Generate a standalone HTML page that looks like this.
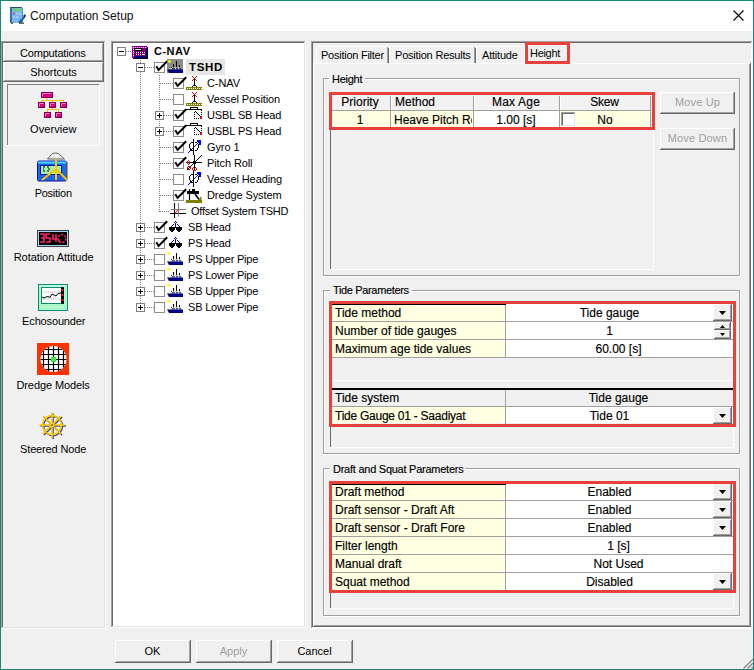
<!DOCTYPE html><html><head><meta charset="utf-8"><style>
html,body{margin:0;padding:0;}
body{width:754px;height:670px;position:relative;overflow:hidden;background:#f0f0f0;font-family:"Liberation Sans",sans-serif;}
body div{position:absolute;}
.t{white-space:nowrap;}
.s{-webkit-text-stroke:0.15px currentColor;}
svg{position:absolute;overflow:visible}
</style></head><body>
<div style="left:0px;top:0px;width:754px;height:31px;background:#fff"></div>
<svg style="left:9px;top:7px" width="17" height="17" viewBox="0 0 17 17">
<rect x="1" y="0" width="12" height="16" fill="#78b8ee"/>
<rect x="1" y="0" width="2" height="16" fill="#3a70b0"/>
<rect x="1" y="0" width="12" height="1" fill="#2a4a78"/>
<rect x="13" y="1" width="1" height="14" fill="#4a90e0"/>
<rect x="4" y="1.5" width="8" height="2.5" fill="#70d060"/>
<rect x="4" y="5.5" width="2" height="2" fill="#c06070"/>
<rect x="7" y="5.5" width="2" height="2" fill="#a8d0f0"/><rect x="10" y="5.5" width="2" height="2" fill="#a8d0f0"/>
<rect x="4" y="9" width="2" height="1.5" fill="#a8d0f0"/><rect x="7" y="9" width="2" height="1.5" fill="#a8d0f0"/>
<path d="M9 15 L15 9 L16.5 10 L12 16 Z" fill="#2060c0"/>
<path d="M14 9 L16 7 L17 9 L15.5 10.5 Z" fill="#202830"/>
<rect x="10" y="15.5" width="5" height="1.2" fill="#303030"/><rect x="2" y="15.5" width="2" height="1.2" fill="#303030"/>
</svg>
<div class="t" style="left:30px;top:9px;font-size:12px;line-height:14px;color:#101010;font-weight:normal;letter-spacing:0.05px;">Computation Setup</div>
<svg style="left:733px;top:10px" width="11" height="11" viewBox="0 0 11 11"><path d="M0.5 0.5 L10.5 10.5 M10.5 0.5 L0.5 10.5" stroke="#000" stroke-width="1.1"/></svg>
<div style="left:0px;top:0px;width:754px;height:1px;background:#17897a"></div>
<div style="left:0px;top:669px;width:754px;height:1px;background:#17897a"></div>
<div style="left:0px;top:0px;width:1px;height:670px;background:#17897a"></div>
<div style="left:753px;top:0px;width:1px;height:670px;background:#17897a"></div>
<div style="left:1px;top:41px;width:105px;height:1px;background:#a0a0a0"></div>
<div style="left:1px;top:41px;width:1px;height:588px;background:#a0a0a0"></div>
<div style="left:2px;top:42px;width:103px;height:1px;background:#696969"></div>
<div style="left:2px;top:42px;width:1px;height:586px;background:#696969"></div>
<div style="left:1px;top:628px;width:105px;height:1px;background:#fff"></div>
<div style="left:105px;top:41px;width:1px;height:588px;background:#fff"></div>
<div style="left:2px;top:627px;width:103px;height:1px;background:#e3e3e3"></div>
<div style="left:104px;top:42px;width:1px;height:586px;background:#e3e3e3"></div>
<div style="left:3px;top:43px;width:101px;height:19px;background:#f0f0f0"></div>
<div style="left:3px;top:43px;width:101px;height:1px;background:#fff"></div>
<div style="left:3px;top:43px;width:1px;height:19px;background:#fff"></div>
<div style="left:3px;top:61px;width:101px;height:1px;background:#696969"></div>
<div style="left:103px;top:43px;width:1px;height:19px;background:#696969"></div>
<div style="left:4px;top:60px;width:99px;height:1px;background:#a0a0a0"></div>
<div style="left:102px;top:44px;width:1px;height:17px;background:#a0a0a0"></div>
<div class="t" style="left:-47.2px;width:200px;text-align:center;top:47px;font-size:11px;line-height:13px;color:#000;font-weight:normal;letter-spacing:-0.2px">Computations</div>
<div style="left:3px;top:62px;width:101px;height:20px;background:#f0f0f0"></div>
<div style="left:3px;top:62px;width:101px;height:1px;background:#fff"></div>
<div style="left:3px;top:62px;width:1px;height:20px;background:#fff"></div>
<div style="left:3px;top:81px;width:101px;height:1px;background:#696969"></div>
<div style="left:103px;top:62px;width:1px;height:20px;background:#696969"></div>
<div style="left:4px;top:80px;width:99px;height:1px;background:#a0a0a0"></div>
<div style="left:102px;top:63px;width:1px;height:18px;background:#a0a0a0"></div>
<div class="t" style="left:-46.5px;width:200px;text-align:center;top:66px;font-size:11px;line-height:13px;color:#000;font-weight:normal;letter-spacing:0px">Shortcuts</div>
<div style="left:7px;top:84px;width:93px;height:1px;background:#808080"></div>
<div style="left:7px;top:84px;width:1px;height:62px;background:#808080"></div>
<div style="left:7px;top:145px;width:93px;height:1px;background:#fff"></div>
<div style="left:99px;top:84px;width:1px;height:62px;background:#fff"></div>
<svg style="left:36px;top:88px" width="32" height="32" viewBox="0 0 32 32">
<g stroke="#f0c000" stroke-width="1" fill="none"><path d="M11 10 V12.5 M5.5 12.5 H27.5 M5.5 12 V14 M16.5 12 V14 M27.5 12 V14 M16.5 20 V21.5 M11.5 21.5 H22.5 M11.5 21 V24 M22.5 21 V24"/></g>
<g fill="#d8007c" stroke="#800050" stroke-width="1">
<rect x="5.5" y="4.5" width="11" height="5"/>
<rect x="2.5" y="14.5" width="6" height="5"/><rect x="13.5" y="14.5" width="6" height="5"/><rect x="24.5" y="14.5" width="6" height="5"/>
<rect x="8.5" y="24.5" width="6" height="5"/><rect x="19.5" y="24.5" width="6" height="5"/>
</g><g stroke="#ff70d0" stroke-width="1" fill="none">
<path d="M6.5 8.5 V5.5 H15.5"/><path d="M3.5 18.5 V15.5 H7.5 M14.5 18.5 V15.5 H18.5 M25.5 18.5 V15.5 H29.5 M9.5 28.5 V25.5 H13.5 M20.5 28.5 V25.5 H24.5"/>
</g></svg>
<div class="t" style="left:-46.7px;width:200px;text-align:center;top:123px;font-size:11px;line-height:13px;color:#000;font-weight:normal;letter-spacing:0.1px">Overview</div>
<svg style="left:36px;top:152px" width="32" height="32" viewBox="0 0 32 32">
<path d="M11.5 7 L16.5 1.5 Q19.5 0.5 22.5 1.5 L28.5 7 Z" fill="#f0f0f0" stroke="#606060" stroke-width="1"/>
<rect x="1.5" y="9" width="29" height="20" rx="1.5" fill="#1a6af0" stroke="#1010a0" stroke-width="1"/>
<rect x="2" y="9.5" width="28" height="2" fill="#40d8ff"/>
<rect x="30" y="10" width="1.5" height="18" fill="#505050"/>
<rect x="4.5" y="13.5" width="21" height="9" fill="#a8f0b0" stroke="#1010a0" stroke-width="1"/>
<path d="M7 15 h2 M7 17 h1 M7 19 h2 M11 15 h2 M11 19 h2 M13 16 v2" stroke="#000" stroke-width="1"/>
<path d="M5 25.5 h2 M9 25.5 h2 M13 25.5 h2 M22 25.5 h5" stroke="#4040c0" stroke-width="1"/>
<path d="M20 7 V28 M20 17 L6 28 M20 17 L31 28" stroke="#f8c400" stroke-width="2" fill="none"/>
</svg>
<div class="t" style="left:-46.8px;width:200px;text-align:center;top:187px;font-size:11px;line-height:13px;color:#000;font-weight:normal;letter-spacing:-0.25px">Position</div>
<svg style="left:37px;top:230px" width="32" height="17" viewBox="0 0 32 17">
<rect x="0.5" y="0.5" width="31" height="16" fill="#000" stroke="#404040"/>
<rect x="1.5" y="1.5" width="29" height="14" fill="none" stroke="#a0d8f8"/>
<g fill="none" stroke="#ff2068" stroke-width="1.6">
<path d="M3 4 H7 V12 H3 M4 8 H7"/><path d="M13 4 H9 V8 H13 V12 H9"/><path d="M16 4 V9 H20 M19 4 V12"/><path d="M22 10 V12"/>
</g>
<circle cx="25" cy="8.5" r="4" fill="none" stroke="#ff2068" stroke-width="1.6" stroke-dasharray="2.2 1.3"/>
</svg>
<div class="t" style="left:-46.4px;width:200px;text-align:center;top:251px;font-size:11px;line-height:13px;color:#000;font-weight:normal;letter-spacing:-0.05px">Rotation Attitude</div>
<svg style="left:38px;top:284px" width="30" height="28" viewBox="0 0 30 28">
<rect x="0.5" y="0.5" width="29" height="26" fill="#a8f8c8" stroke="#108878" stroke-width="1"/>
<rect x="1.5" y="1.5" width="27" height="1" fill="#c0fff0"/>
<rect x="3.5" y="3.5" width="20" height="16" fill="#fff" stroke="#108878" stroke-width="1"/>
<path d="M4 8 h19 M4 15 h19" stroke="#c8c8c8" stroke-width="0.8"/>
<path d="M4 13 L6 14 L8 13 L10 12.5 L12 13.5 L14 10 L16 11 L18 12 L20 9.5 L23 9" fill="none" stroke="#000" stroke-width="1"/>
<rect x="23" y="3" width="3" height="17" fill="#000"/>
<rect x="23.5" y="5" width="2" height="2" fill="#ff1010"/><rect x="23.5" y="10" width="2" height="2" fill="#ff1010"/><rect x="23.5" y="15" width="2" height="2" fill="#ff1010"/>
<path d="M4 23 h1 M8 23 h1 M12 23 h1 M16 23 h1 M19 23 h1 M22 23 h1 M25 23 h1" stroke="#fff" stroke-width="1.2"/>
</svg>
<div class="t" style="left:-46.3px;width:200px;text-align:center;top:315px;font-size:11px;line-height:13px;color:#000;font-weight:normal;letter-spacing:-0.15px">Echosounder</div>
<svg style="left:37px;top:343px" width="32" height="32" viewBox="0 0 32 32">
<rect x="0" y="0" width="32" height="32" fill="#ff3300"/>
<circle cx="16.5" cy="16" r="13" fill="#fff"/>
<path d="M6.5 7.69 V24.31 M7.63 6.5 H25.37 M11.5 4.00 V28.00 M4.30 11.5 H28.70 M16.5 3.00 V29.00 M3.51 16.5 H29.49 M21.5 4.00 V28.00 M4.72 21.5 H28.28 M26.5 7.69 V24.31 M8.84 26.5 H24.16" stroke="#000" stroke-width="1.2"/>
<rect x="14" y="14" width="5" height="5" fill="#30f030"/>
</svg>
<div class="t" style="left:-46.9px;width:200px;text-align:center;top:379px;font-size:11px;line-height:13px;color:#000;font-weight:normal;letter-spacing:-0.1px">Dredge Models</div>
<svg style="left:38px;top:411px" width="30" height="30" viewBox="0 0 30 30">
<g stroke="#4848a0" stroke-width="1.6" fill="none" transform="translate(1,1)">
<path d="M14 1.5 V27 M1.5 14 H27 M5 5 L23 23 M23 5 L5 23"/><circle cx="14" cy="14" r="9.5"/></g>
<g stroke="#f8c800" stroke-width="1.6" fill="none">
<path d="M14 1.5 V27 M1.5 14 H27 M5 5 L23 23 M23 5 L5 23"/><circle cx="14" cy="14" r="9.5"/></g>
<circle cx="14" cy="14" r="1" fill="#807040"/>
</svg>
<div class="t" style="left:-46.9px;width:200px;text-align:center;top:443px;font-size:11px;line-height:13px;color:#000;font-weight:normal;letter-spacing:-0.15px">Steered Node</div>
<div style="left:111px;top:41px;width:195px;height:587px;background:#fff"></div>
<div style="left:111px;top:41px;width:195px;height:1px;background:#a0a0a0"></div>
<div style="left:111px;top:41px;width:1px;height:587px;background:#a0a0a0"></div>
<div style="left:112px;top:42px;width:193px;height:1px;background:#696969"></div>
<div style="left:112px;top:42px;width:1px;height:585px;background:#696969"></div>
<div style="left:111px;top:627px;width:195px;height:1px;background:#fff"></div>
<div style="left:305px;top:41px;width:1px;height:587px;background:#fff"></div>
<div style="left:112px;top:626px;width:193px;height:1px;background:#e3e3e3"></div>
<div style="left:304px;top:42px;width:1px;height:585px;background:#e3e3e3"></div>
<div style="left:140px;top:58px;width:1px;height:250px;background:repeating-linear-gradient(180deg,#808080 0 1px,transparent 1px 2px)"></div>
<div style="left:159px;top:75px;width:1px;height:137px;background:repeating-linear-gradient(180deg,#808080 0 1px,transparent 1px 2px)"></div>
<div style="left:117px;top:47px;width:9px;height:9px;border:1px solid #808080;box-sizing:border-box;background:#fff"></div>
<div style="left:119px;top:51px;width:5px;height:1px;background:#000"></div>
<div style="left:126px;top:51px;width:6px;height:1px;background:repeating-linear-gradient(90deg,#808080 0 1px,transparent 1px 2px)"></div>
<svg style="left:131px;top:45px" width="18" height="15" viewBox="0 0 18 15"><rect x="1" y="1" width="15" height="12" fill="#800080"/><rect x="16" y="2" width="1" height="12" fill="#000"/><rect x="2" y="13" width="15" height="1" fill="#000"/><rect x="15" y="2" width="1" height="11" fill="#000080"/><rect x="2" y="11" width="14" height="2" fill="#000080"/><rect x="1" y="2" width="15" height="1" fill="#ff00ff"/><rect x="2" y="2" width="1" height="11" fill="#ff00ff"/><rect x="2" y="2" width="1" height="1" fill="#fff"/><rect x="4" y="2" width="1" height="1" fill="#fff"/><rect x="6" y="2" width="1" height="1" fill="#fff"/><rect x="8" y="2" width="1" height="1" fill="#fff"/><rect x="10" y="2" width="1" height="1" fill="#fff"/><rect x="12" y="2" width="1" height="1" fill="#fff"/><rect x="14" y="2" width="1" height="1" fill="#fff"/><rect x="2" y="2" width="1" height="1" fill="#fff"/><rect x="2" y="4" width="1" height="1" fill="#fff"/><rect x="2" y="6" width="1" height="1" fill="#fff"/><rect x="2" y="8" width="1" height="1" fill="#fff"/><rect x="2" y="10" width="1" height="1" fill="#fff"/><rect x="3" y="3" width="8" height="3" fill="#000"/><rect x="4" y="4" width="6" height="1" fill="#e8f4e8"/><rect x="4" y="7" width="11" height="1" fill="#000"/><rect x="5" y="7" width="1" height="1" fill="#fff"/><rect x="7" y="7" width="1" height="1" fill="#fff"/><rect x="9" y="7" width="1" height="1" fill="#fff"/><rect x="11" y="7" width="1" height="1" fill="#fff"/><rect x="13" y="7" width="1" height="1" fill="#fff"/><rect x="4" y="9" width="11" height="1" fill="#000"/><rect x="5" y="9" width="1" height="1" fill="#fff"/><rect x="7" y="9" width="1" height="1" fill="#fff"/><rect x="9" y="9" width="1" height="1" fill="#fff"/><rect x="11" y="9" width="1" height="1" fill="#fff"/><rect x="13" y="9" width="1" height="1" fill="#fff"/><rect x="11" y="9" width="3" height="1" fill="#fff"/></svg>
<div class="t" style="left:154px;top:45px;font-size:11px;line-height:13px;color:#000;font-weight:bold;letter-spacing:0.5px;">C-NAV</div>
<div style="left:145px;top:67px;width:9px;height:1px;background:repeating-linear-gradient(90deg,#808080 0 1px,transparent 1px 2px)"></div>
<div style="left:136px;top:63px;width:9px;height:9px;border:1px solid #808080;box-sizing:border-box;background:#fff"></div>
<div style="left:138px;top:67px;width:5px;height:1px;background:#000"></div>
<div style="left:154px;top:62px;width:11px;height:11px;border:1px solid #8c8c8c;box-sizing:border-box;background:#fff"></div>
<svg style="left:154px;top:60px" width="16" height="16" viewBox="0 0 16 16"><path d="M2.3 6.3 L4.6 10 L13.2 1.2" fill="none" stroke="#000" stroke-width="2"/></svg>
<svg style="left:167px;top:59px" width="16" height="16" viewBox="0 0 16 16"><rect x="0" y="0" width="16" height="14" fill="#8c8c8c"/>
<path d="M1 2.5 h3 M2.5 1 v3" stroke="#ffff00" stroke-width="1.3"/>
<path d="M6.5 5 V8.5 M9.5 2 V8.5 M12.5 6 V8.5" stroke="#000" stroke-width="1.1"/>
<rect x="4" y="8" width="1" height="1" fill="#000"/>
<path d="M2 10 L5 8.5 H14 V10 Z" fill="#d8d8d8"/>
<path d="M5 9.8 h3 M9 9.8 h2 M12 9.8 h2" stroke="#000" stroke-width="1"/>
<path d="M0 10.5 H16 V14 H2 Z" fill="#000090"/>
<path d="M2 12 h1 M4 12 h1" stroke="#000" stroke-width="1"/></svg>
<div style="left:186px;top:59px;width:39px;height:16px;background:#e6e6e6"></div>
<div class="t" style="left:189px;top:61px;font-size:11.5px;line-height:13.5px;color:#000;font-weight:bold;letter-spacing:0.7px;">TSHD</div>
<div style="left:160px;top:83px;width:13px;height:1px;background:repeating-linear-gradient(90deg,#808080 0 1px,transparent 1px 2px)"></div>
<div style="left:173px;top:78px;width:11px;height:11px;border:1px solid #8c8c8c;box-sizing:border-box;background:#fff"></div>
<svg style="left:173px;top:76px" width="16" height="16" viewBox="0 0 16 16"><path d="M2.3 6.3 L4.6 10 L13.2 1.2" fill="none" stroke="#000" stroke-width="2"/></svg>
<svg style="left:186px;top:75px" width="16" height="16" viewBox="0 0 16 16"><rect x="6" y="1" width="1" height="1" fill="#ff0000"/><rect x="7" y="2" width="1" height="1" fill="#ff0000"/><rect x="8" y="3" width="1" height="1" fill="#ff0000"/><rect x="9" y="2" width="1" height="1" fill="#ff0000"/><rect x="10" y="1" width="1" height="1" fill="#ff0000"/><rect x="7" y="4" width="1" height="1" fill="#ff0000"/><rect x="6" y="5" width="1" height="1" fill="#ff0000"/><rect x="9" y="4" width="1" height="1" fill="#ff0000"/><rect x="10" y="5" width="1" height="1" fill="#ff0000"/><rect x="8" y="4" width="1" height="7" fill="#000"/><rect x="7" y="10" width="1" height="1" fill="#000"/><rect x="8" y="10" width="1" height="1" fill="#000"/><rect x="9" y="10" width="1" height="1" fill="#000"/><rect x="6" y="11" width="1" height="1" fill="#000"/><rect x="10" y="11" width="1" height="1" fill="#000"/><rect x="0" y="12" width="16" height="1" fill="#808000"/><rect x="0" y="13" width="16" height="1" fill="#808000"/><rect x="1" y="13" width="1" height="1" fill="#ffffff"/><rect x="3" y="13" width="1" height="1" fill="#ffffff"/><rect x="5" y="13" width="1" height="1" fill="#ffffff"/><rect x="7" y="13" width="1" height="1" fill="#ffffff"/><rect x="9" y="13" width="1" height="1" fill="#ffffff"/><rect x="11" y="13" width="1" height="1" fill="#ffffff"/><rect x="13" y="13" width="1" height="1" fill="#ffffff"/><rect x="15" y="13" width="1" height="1" fill="#ffffff"/><rect x="0" y="14" width="16" height="1" fill="#808000"/></svg>
<div class="t" style="left:207px;top:77px;font-size:11px;line-height:13px;color:#000;font-weight:normal;letter-spacing:-0.1px;">C-NAV</div>
<div style="left:160px;top:99px;width:13px;height:1px;background:repeating-linear-gradient(90deg,#808080 0 1px,transparent 1px 2px)"></div>
<div style="left:173px;top:94px;width:11px;height:11px;border:1px solid #8c8c8c;box-sizing:border-box;background:#fff"></div>
<svg style="left:186px;top:91px" width="16" height="16" viewBox="0 0 16 16"><rect x="6" y="1" width="1" height="1" fill="#ff0000"/><rect x="7" y="2" width="1" height="1" fill="#ff0000"/><rect x="8" y="3" width="1" height="1" fill="#ff0000"/><rect x="9" y="2" width="1" height="1" fill="#ff0000"/><rect x="10" y="1" width="1" height="1" fill="#ff0000"/><rect x="7" y="4" width="1" height="1" fill="#ff0000"/><rect x="6" y="5" width="1" height="1" fill="#ff0000"/><rect x="9" y="4" width="1" height="1" fill="#ff0000"/><rect x="10" y="5" width="1" height="1" fill="#ff0000"/><rect x="8" y="4" width="1" height="7" fill="#000"/><rect x="7" y="10" width="1" height="1" fill="#000"/><rect x="8" y="10" width="1" height="1" fill="#000"/><rect x="9" y="10" width="1" height="1" fill="#000"/><rect x="6" y="11" width="1" height="1" fill="#000"/><rect x="10" y="11" width="1" height="1" fill="#000"/><rect x="0" y="12" width="16" height="1" fill="#808000"/><rect x="0" y="13" width="16" height="1" fill="#808000"/><rect x="1" y="13" width="1" height="1" fill="#ffffff"/><rect x="3" y="13" width="1" height="1" fill="#ffffff"/><rect x="5" y="13" width="1" height="1" fill="#ffffff"/><rect x="7" y="13" width="1" height="1" fill="#ffffff"/><rect x="9" y="13" width="1" height="1" fill="#ffffff"/><rect x="11" y="13" width="1" height="1" fill="#ffffff"/><rect x="13" y="13" width="1" height="1" fill="#ffffff"/><rect x="15" y="13" width="1" height="1" fill="#ffffff"/><rect x="0" y="14" width="16" height="1" fill="#808000"/></svg>
<div class="t" style="left:207px;top:93px;font-size:11px;line-height:13px;color:#000;font-weight:normal;letter-spacing:-0.1px;">Vessel Position</div>
<div style="left:155px;top:111px;width:9px;height:9px;border:1px solid #808080;box-sizing:border-box;background:#fff"></div>
<div style="left:157px;top:115px;width:5px;height:1px;background:#000"></div>
<div style="left:159px;top:113px;width:1px;height:5px;background:#000"></div>
<div style="left:164px;top:115px;width:9px;height:1px;background:repeating-linear-gradient(90deg,#808080 0 1px,transparent 1px 2px)"></div>
<div style="left:173px;top:110px;width:11px;height:11px;border:1px solid #8c8c8c;box-sizing:border-box;background:#fff"></div>
<svg style="left:173px;top:108px" width="16" height="16" viewBox="0 0 16 16"><path d="M2.3 6.3 L4.6 10 L13.2 1.2" fill="none" stroke="#000" stroke-width="2"/></svg>
<svg style="left:186px;top:107px" width="16" height="16" viewBox="0 0 16 16"><rect x="0" y="2" width="16" height="1" fill="#000"/><rect x="-2" y="4" width="1" height="1" fill="#000"/><rect x="-1" y="3" width="1" height="1" fill="#000"/><rect x="4" y="0" width="8" height="3" fill="#000"/><rect x="5" y="1" width="6" height="1" fill="#fff"/><rect x="15" y="3" width="1" height="1" fill="#000"/><rect x="8" y="5" width="1" height="1" fill="#000"/><rect x="8" y="7" width="1" height="1" fill="#000"/><rect x="8" y="9" width="1" height="1" fill="#000"/><rect x="8" y="11" width="1" height="1" fill="#000"/><rect x="10" y="11" width="1" height="1" fill="#000"/><rect x="12" y="11" width="1" height="1" fill="#000"/><rect x="15" y="5" width="1" height="1" fill="#000"/><rect x="15" y="7" width="1" height="1" fill="#000"/><rect x="9" y="4" width="1" height="1" fill="#000"/><rect x="10" y="5" width="1" height="1" fill="#000"/><rect x="11" y="6" width="1" height="1" fill="#000"/><rect x="12" y="7" width="1" height="1" fill="#000"/><rect x="13" y="8" width="1" height="1" fill="#000"/><rect x="14" y="9" width="2" height="3" fill="#ff0000"/><rect x="14" y="9" width="1" height="1" fill="#400000"/></svg>
<div class="t" style="left:207px;top:109px;font-size:11px;line-height:13px;color:#000;font-weight:normal;letter-spacing:-0.1px;">USBL SB Head</div>
<div style="left:155px;top:127px;width:9px;height:9px;border:1px solid #808080;box-sizing:border-box;background:#fff"></div>
<div style="left:157px;top:131px;width:5px;height:1px;background:#000"></div>
<div style="left:159px;top:129px;width:1px;height:5px;background:#000"></div>
<div style="left:164px;top:131px;width:9px;height:1px;background:repeating-linear-gradient(90deg,#808080 0 1px,transparent 1px 2px)"></div>
<div style="left:173px;top:126px;width:11px;height:11px;border:1px solid #8c8c8c;box-sizing:border-box;background:#fff"></div>
<svg style="left:173px;top:124px" width="16" height="16" viewBox="0 0 16 16"><path d="M2.3 6.3 L4.6 10 L13.2 1.2" fill="none" stroke="#000" stroke-width="2"/></svg>
<svg style="left:186px;top:123px" width="16" height="16" viewBox="0 0 16 16"><rect x="0" y="2" width="16" height="1" fill="#000"/><rect x="-2" y="4" width="1" height="1" fill="#000"/><rect x="-1" y="3" width="1" height="1" fill="#000"/><rect x="4" y="0" width="8" height="3" fill="#000"/><rect x="5" y="1" width="6" height="1" fill="#fff"/><rect x="15" y="3" width="1" height="1" fill="#000"/><rect x="8" y="5" width="1" height="1" fill="#000"/><rect x="8" y="7" width="1" height="1" fill="#000"/><rect x="8" y="9" width="1" height="1" fill="#000"/><rect x="8" y="11" width="1" height="1" fill="#000"/><rect x="10" y="11" width="1" height="1" fill="#000"/><rect x="12" y="11" width="1" height="1" fill="#000"/><rect x="15" y="5" width="1" height="1" fill="#000"/><rect x="15" y="7" width="1" height="1" fill="#000"/><rect x="9" y="4" width="1" height="1" fill="#000"/><rect x="10" y="5" width="1" height="1" fill="#000"/><rect x="11" y="6" width="1" height="1" fill="#000"/><rect x="12" y="7" width="1" height="1" fill="#000"/><rect x="13" y="8" width="1" height="1" fill="#000"/><rect x="14" y="9" width="2" height="3" fill="#ff0000"/><rect x="14" y="9" width="1" height="1" fill="#400000"/></svg>
<div class="t" style="left:207px;top:125px;font-size:11px;line-height:13px;color:#000;font-weight:normal;letter-spacing:-0.1px;">USBL PS Head</div>
<div style="left:160px;top:147px;width:13px;height:1px;background:repeating-linear-gradient(90deg,#808080 0 1px,transparent 1px 2px)"></div>
<div style="left:173px;top:142px;width:11px;height:11px;border:1px solid #8c8c8c;box-sizing:border-box;background:#fff"></div>
<svg style="left:173px;top:140px" width="16" height="16" viewBox="0 0 16 16"><path d="M2.3 6.3 L4.6 10 L13.2 1.2" fill="none" stroke="#000" stroke-width="2"/></svg>
<svg style="left:186px;top:139px" width="16" height="16" viewBox="0 0 16 16"><rect x="5" y="3" width="1" height="1" fill="#000"/><rect x="6" y="3" width="1" height="1" fill="#000"/><rect x="9" y="3" width="1" height="1" fill="#000"/><rect x="10" y="3" width="1" height="1" fill="#000"/><rect x="4" y="4" width="1" height="1" fill="#000"/><rect x="11" y="4" width="1" height="1" fill="#000"/><rect x="3" y="5" width="1" height="1" fill="#000"/><rect x="3" y="6" width="1" height="1" fill="#000"/><rect x="3" y="7" width="1" height="1" fill="#000"/><rect x="3" y="8" width="1" height="1" fill="#000"/><rect x="12" y="5" width="1" height="1" fill="#000"/><rect x="12" y="6" width="1" height="1" fill="#000"/><rect x="12" y="7" width="1" height="1" fill="#000"/><rect x="12" y="8" width="1" height="1" fill="#000"/><rect x="4" y="9" width="1" height="1" fill="#000"/><rect x="4" y="10" width="1" height="1" fill="#000"/><rect x="11" y="9" width="1" height="1" fill="#000"/><rect x="11" y="10" width="1" height="1" fill="#000"/><rect x="5" y="11" width="1" height="1" fill="#000"/><rect x="6" y="11" width="1" height="1" fill="#000"/><rect x="9" y="11" width="1" height="1" fill="#000"/><rect x="10" y="11" width="1" height="1" fill="#000"/><rect x="7" y="0" width="1" height="16" fill="#000"/><rect x="2" y="13" width="1" height="1" fill="#0000ff"/><rect x="3" y="12" width="1" height="1" fill="#0000ff"/><rect x="4" y="11" width="1" height="1" fill="#0000ff"/><rect x="5" y="10" width="1" height="1" fill="#0000ff"/><rect x="6" y="9" width="1" height="1" fill="#0000ff"/><rect x="8" y="7" width="1" height="1" fill="#0000ff"/><rect x="9" y="6" width="1" height="1" fill="#0000ff"/><rect x="10" y="5" width="1" height="1" fill="#0000ff"/><rect x="11" y="4" width="1" height="1" fill="#0000ff"/><rect x="12" y="3" width="1" height="1" fill="#0000ff"/><rect x="11" y="1" width="4" height="2" fill="#0000ff"/><rect x="13" y="1" width="2" height="5" fill="#0000ff"/></svg>
<div class="t" style="left:207px;top:141px;font-size:11px;line-height:13px;color:#000;font-weight:normal;letter-spacing:-0.1px;">Gyro 1</div>
<div style="left:160px;top:163px;width:13px;height:1px;background:repeating-linear-gradient(90deg,#808080 0 1px,transparent 1px 2px)"></div>
<div style="left:173px;top:158px;width:11px;height:11px;border:1px solid #8c8c8c;box-sizing:border-box;background:#fff"></div>
<svg style="left:173px;top:156px" width="16" height="16" viewBox="0 0 16 16"><path d="M2.3 6.3 L4.6 10 L13.2 1.2" fill="none" stroke="#000" stroke-width="2"/></svg>
<svg style="left:186px;top:155px" width="16" height="16" viewBox="0 0 16 16"><rect x="8" y="0" width="1" height="16" fill="#000"/><rect x="0" y="7" width="16" height="1" fill="#000"/><rect x="7" y="6" width="3" height="3" fill="#000"/><rect x="15" y="0" width="1" height="1" fill="#000"/><rect x="14" y="1" width="1" height="1" fill="#000"/><rect x="13" y="2" width="1" height="1" fill="#000"/><rect x="12" y="3" width="1" height="1" fill="#000"/><rect x="11" y="4" width="1" height="1" fill="#000"/><rect x="10" y="5" width="1" height="1" fill="#000"/><rect x="6" y="9" width="1" height="1" fill="#000"/><rect x="5" y="10" width="1" height="1" fill="#000"/><rect x="4" y="11" width="1" height="1" fill="#000"/><rect x="3" y="12" width="1" height="1" fill="#000"/><rect x="2" y="13" width="1" height="1" fill="#000"/><rect x="1" y="14" width="1" height="1" fill="#000"/><rect x="2" y="5" width="1" height="1" fill="#ff0000"/><rect x="1" y="6" width="1" height="1" fill="#ff0000"/><rect x="3" y="6" width="1" height="1" fill="#ff0000"/><rect x="1" y="7" width="1" height="1" fill="#ff0000"/><rect x="3" y="7" width="1" height="1" fill="#ff0000"/><rect x="1" y="8" width="1" height="1" fill="#ff0000"/><rect x="3" y="8" width="1" height="1" fill="#ff0000"/><rect x="2" y="9" width="1" height="1" fill="#ff0000"/><rect x="2" y="11" width="1" height="1" fill="#ff0000"/><rect x="3" y="11" width="1" height="1" fill="#ff0000"/><rect x="1" y="12" width="1" height="1" fill="#ff0000"/><rect x="4" y="12" width="1" height="1" fill="#ff0000"/><rect x="1" y="13" width="1" height="1" fill="#ff0000"/><rect x="4" y="13" width="1" height="1" fill="#ff0000"/><rect x="2" y="14" width="1" height="1" fill="#ff0000"/><rect x="3" y="14" width="1" height="1" fill="#ff0000"/><rect x="7" y="12" width="1" height="1" fill="#ff0000"/><rect x="9" y="12" width="1" height="1" fill="#ff0000"/><rect x="6" y="13" width="1" height="1" fill="#ff0000"/><rect x="10" y="13" width="1" height="1" fill="#ff0000"/><rect x="6" y="14" width="1" height="1" fill="#ff0000"/><rect x="10" y="14" width="1" height="1" fill="#ff0000"/><rect x="7" y="15" width="1" height="1" fill="#ff0000"/><rect x="8" y="15" width="1" height="1" fill="#ff0000"/><rect x="9" y="15" width="1" height="1" fill="#ff0000"/></svg>
<div class="t" style="left:207px;top:157px;font-size:11px;line-height:13px;color:#000;font-weight:normal;letter-spacing:-0.1px;">Pitch Roll</div>
<div style="left:160px;top:179px;width:13px;height:1px;background:repeating-linear-gradient(90deg,#808080 0 1px,transparent 1px 2px)"></div>
<div style="left:173px;top:174px;width:11px;height:11px;border:1px solid #8c8c8c;box-sizing:border-box;background:#fff"></div>
<svg style="left:186px;top:171px" width="16" height="16" viewBox="0 0 16 16"><rect x="5" y="3" width="1" height="1" fill="#000"/><rect x="6" y="3" width="1" height="1" fill="#000"/><rect x="9" y="3" width="1" height="1" fill="#000"/><rect x="10" y="3" width="1" height="1" fill="#000"/><rect x="4" y="4" width="1" height="1" fill="#000"/><rect x="11" y="4" width="1" height="1" fill="#000"/><rect x="3" y="5" width="1" height="1" fill="#000"/><rect x="3" y="6" width="1" height="1" fill="#000"/><rect x="3" y="7" width="1" height="1" fill="#000"/><rect x="3" y="8" width="1" height="1" fill="#000"/><rect x="12" y="5" width="1" height="1" fill="#000"/><rect x="12" y="6" width="1" height="1" fill="#000"/><rect x="12" y="7" width="1" height="1" fill="#000"/><rect x="12" y="8" width="1" height="1" fill="#000"/><rect x="4" y="9" width="1" height="1" fill="#000"/><rect x="4" y="10" width="1" height="1" fill="#000"/><rect x="11" y="9" width="1" height="1" fill="#000"/><rect x="11" y="10" width="1" height="1" fill="#000"/><rect x="5" y="11" width="1" height="1" fill="#000"/><rect x="6" y="11" width="1" height="1" fill="#000"/><rect x="9" y="11" width="1" height="1" fill="#000"/><rect x="10" y="11" width="1" height="1" fill="#000"/><rect x="7" y="0" width="1" height="16" fill="#000"/><rect x="2" y="13" width="1" height="1" fill="#0000ff"/><rect x="3" y="12" width="1" height="1" fill="#0000ff"/><rect x="4" y="11" width="1" height="1" fill="#0000ff"/><rect x="5" y="10" width="1" height="1" fill="#0000ff"/><rect x="6" y="9" width="1" height="1" fill="#0000ff"/><rect x="8" y="7" width="1" height="1" fill="#0000ff"/><rect x="9" y="6" width="1" height="1" fill="#0000ff"/><rect x="10" y="5" width="1" height="1" fill="#0000ff"/><rect x="11" y="4" width="1" height="1" fill="#0000ff"/><rect x="12" y="3" width="1" height="1" fill="#0000ff"/><rect x="11" y="1" width="4" height="2" fill="#0000ff"/><rect x="13" y="1" width="2" height="5" fill="#0000ff"/></svg>
<div class="t" style="left:207px;top:173px;font-size:11px;line-height:13px;color:#000;font-weight:normal;letter-spacing:-0.1px;">Vessel Heading</div>
<div style="left:160px;top:195px;width:13px;height:1px;background:repeating-linear-gradient(90deg,#808080 0 1px,transparent 1px 2px)"></div>
<div style="left:173px;top:190px;width:11px;height:11px;border:1px solid #8c8c8c;box-sizing:border-box;background:#fff"></div>
<svg style="left:173px;top:188px" width="16" height="16" viewBox="0 0 16 16"><path d="M2.3 6.3 L4.6 10 L13.2 1.2" fill="none" stroke="#000" stroke-width="2"/></svg>
<svg style="left:186px;top:187px" width="16" height="16" viewBox="0 0 16 16"><rect x="1" y="4" width="12" height="3" fill="#000"/>
<rect x="6" y="2" width="3" height="2" fill="#000"/>
<path d="M3.5 2 V13" stroke="#000" stroke-width="1.2"/>
<path d="M9 7 L13 12.5" stroke="#000" stroke-width="1.6"/>
<rect x="0" y="13" width="16" height="3" fill="#808000"/>
<path d="M12 13 L15.5 9 V13 Z" fill="#808000"/></svg>
<div class="t" style="left:207px;top:189px;font-size:11px;line-height:13px;color:#000;font-weight:normal;letter-spacing:-0.1px;">Dredge System</div>
<div style="left:160px;top:211px;width:10px;height:1px;background:repeating-linear-gradient(90deg,#808080 0 1px,transparent 1px 2px)"></div>
<svg style="left:170px;top:203px" width="16" height="16" viewBox="0 0 16 16"><path d="M4.5 0 V15 M0 10.5 H16" stroke="#000" stroke-width="1.1"/>
<path d="M8.5 0 V13.5 M1 6.5 H16" stroke="#808080" stroke-width="1.1"/>
<path d="M5 10 L8 7" stroke="#ff0000" stroke-width="1.1" stroke-dasharray="1 0.5"/></svg>
<div class="t" style="left:191px;top:205px;font-size:11px;line-height:13px;color:#000;font-weight:normal;letter-spacing:-0.25px;">Offset System TSHD</div>
<div style="left:136px;top:223px;width:9px;height:9px;border:1px solid #808080;box-sizing:border-box;background:#fff"></div>
<div style="left:138px;top:227px;width:5px;height:1px;background:#000"></div>
<div style="left:140px;top:225px;width:1px;height:5px;background:#000"></div>
<div style="left:145px;top:227px;width:9px;height:1px;background:repeating-linear-gradient(90deg,#808080 0 1px,transparent 1px 2px)"></div>
<div style="left:154px;top:222px;width:11px;height:11px;border:1px solid #8c8c8c;box-sizing:border-box;background:#fff"></div>
<svg style="left:154px;top:220px" width="16" height="16" viewBox="0 0 16 16"><path d="M2.3 6.3 L4.6 10 L13.2 1.2" fill="none" stroke="#000" stroke-width="2"/></svg>
<svg style="left:168px;top:219px" width="16" height="16" viewBox="0 0 16 16"><rect x="1" y="8" width="13" height="1" fill="#000"/><rect x="1" y="9" width="6" height="1" fill="#000"/><rect x="8" y="9" width="6" height="1" fill="#000"/><rect x="1" y="10" width="6" height="1" fill="#000"/><rect x="8" y="10" width="6" height="1" fill="#000"/><rect x="2" y="11" width="4" height="1" fill="#000"/><rect x="9" y="11" width="4" height="1" fill="#000"/><rect x="3" y="12" width="2" height="1" fill="#000"/><rect x="10" y="12" width="2" height="1" fill="#000"/><rect x="7" y="2" width="1" height="1" fill="#000090"/><rect x="6" y="3" width="1" height="1" fill="#000090"/><rect x="8" y="3" width="1" height="1" fill="#000090"/><rect x="7" y="4" width="1" height="1" fill="#000090"/><rect x="7" y="5" width="1" height="1" fill="#000090"/><rect x="7" y="6" width="1" height="1" fill="#000090"/><rect x="7" y="7" width="1" height="1" fill="#000090"/><rect x="3" y="7" width="1" height="1" fill="#000090"/><rect x="4" y="6" width="1" height="1" fill="#000090"/><rect x="5" y="5" width="1" height="1" fill="#000090"/><rect x="9" y="5" width="1" height="1" fill="#000090"/><rect x="10" y="6" width="1" height="1" fill="#000090"/><rect x="11" y="7" width="1" height="1" fill="#000090"/></svg>
<div class="t" style="left:188px;top:221px;font-size:11px;line-height:13px;color:#000;font-weight:normal;letter-spacing:-0.2px;">SB Head</div>
<div style="left:136px;top:239px;width:9px;height:9px;border:1px solid #808080;box-sizing:border-box;background:#fff"></div>
<div style="left:138px;top:243px;width:5px;height:1px;background:#000"></div>
<div style="left:140px;top:241px;width:1px;height:5px;background:#000"></div>
<div style="left:145px;top:243px;width:9px;height:1px;background:repeating-linear-gradient(90deg,#808080 0 1px,transparent 1px 2px)"></div>
<div style="left:154px;top:238px;width:11px;height:11px;border:1px solid #8c8c8c;box-sizing:border-box;background:#fff"></div>
<svg style="left:154px;top:236px" width="16" height="16" viewBox="0 0 16 16"><path d="M2.3 6.3 L4.6 10 L13.2 1.2" fill="none" stroke="#000" stroke-width="2"/></svg>
<svg style="left:168px;top:235px" width="16" height="16" viewBox="0 0 16 16"><rect x="1" y="8" width="13" height="1" fill="#000"/><rect x="1" y="9" width="6" height="1" fill="#000"/><rect x="8" y="9" width="6" height="1" fill="#000"/><rect x="1" y="10" width="6" height="1" fill="#000"/><rect x="8" y="10" width="6" height="1" fill="#000"/><rect x="2" y="11" width="4" height="1" fill="#000"/><rect x="9" y="11" width="4" height="1" fill="#000"/><rect x="3" y="12" width="2" height="1" fill="#000"/><rect x="10" y="12" width="2" height="1" fill="#000"/><rect x="7" y="2" width="1" height="1" fill="#000090"/><rect x="6" y="3" width="1" height="1" fill="#000090"/><rect x="8" y="3" width="1" height="1" fill="#000090"/><rect x="7" y="4" width="1" height="1" fill="#000090"/><rect x="7" y="5" width="1" height="1" fill="#000090"/><rect x="7" y="6" width="1" height="1" fill="#000090"/><rect x="7" y="7" width="1" height="1" fill="#000090"/><rect x="3" y="7" width="1" height="1" fill="#000090"/><rect x="4" y="6" width="1" height="1" fill="#000090"/><rect x="5" y="5" width="1" height="1" fill="#000090"/><rect x="9" y="5" width="1" height="1" fill="#000090"/><rect x="10" y="6" width="1" height="1" fill="#000090"/><rect x="11" y="7" width="1" height="1" fill="#000090"/></svg>
<div class="t" style="left:188px;top:237px;font-size:11px;line-height:13px;color:#000;font-weight:normal;letter-spacing:-0.2px;">PS Head</div>
<div style="left:136px;top:255px;width:9px;height:9px;border:1px solid #808080;box-sizing:border-box;background:#fff"></div>
<div style="left:138px;top:259px;width:5px;height:1px;background:#000"></div>
<div style="left:140px;top:257px;width:1px;height:5px;background:#000"></div>
<div style="left:145px;top:259px;width:9px;height:1px;background:repeating-linear-gradient(90deg,#808080 0 1px,transparent 1px 2px)"></div>
<div style="left:154px;top:254px;width:11px;height:11px;border:1px solid #8c8c8c;box-sizing:border-box;background:#fff"></div>
<svg style="left:167px;top:252px" width="16" height="16" viewBox="0 0 16 16"><path d="M0.5 1.5 h3 M2 0 v3" stroke="#ffff00" stroke-width="1.3"/>
<path d="M6.5 4 V7.5 M9.5 1 V7.5 M12.5 5 V7.5" stroke="#000" stroke-width="1.1"/>
<rect x="4" y="7" width="1" height="1" fill="#000"/>
<path d="M2 9 L5 7.5 H15 V9 Z" fill="#d8d8d8"/>
<path d="M5 9 h3 M9 9 h2 M12 9 h2" stroke="#000" stroke-width="1"/>
<path d="M0 9.5 H16 V13 H2 Z" fill="#000090"/>
<path d="M2 11 h1 M4 11 h1" stroke="#000" stroke-width="1"/></svg>
<div class="t" style="left:188px;top:253px;font-size:11px;line-height:13px;color:#000;font-weight:normal;letter-spacing:-0.2px;">PS Upper Pipe</div>
<div style="left:136px;top:271px;width:9px;height:9px;border:1px solid #808080;box-sizing:border-box;background:#fff"></div>
<div style="left:138px;top:275px;width:5px;height:1px;background:#000"></div>
<div style="left:140px;top:273px;width:1px;height:5px;background:#000"></div>
<div style="left:145px;top:275px;width:9px;height:1px;background:repeating-linear-gradient(90deg,#808080 0 1px,transparent 1px 2px)"></div>
<div style="left:154px;top:270px;width:11px;height:11px;border:1px solid #8c8c8c;box-sizing:border-box;background:#fff"></div>
<svg style="left:167px;top:268px" width="16" height="16" viewBox="0 0 16 16"><path d="M0.5 1.5 h3 M2 0 v3" stroke="#ffff00" stroke-width="1.3"/>
<path d="M6.5 4 V7.5 M9.5 1 V7.5 M12.5 5 V7.5" stroke="#000" stroke-width="1.1"/>
<rect x="4" y="7" width="1" height="1" fill="#000"/>
<path d="M2 9 L5 7.5 H15 V9 Z" fill="#d8d8d8"/>
<path d="M5 9 h3 M9 9 h2 M12 9 h2" stroke="#000" stroke-width="1"/>
<path d="M0 9.5 H16 V13 H2 Z" fill="#000090"/>
<path d="M2 11 h1 M4 11 h1" stroke="#000" stroke-width="1"/></svg>
<div class="t" style="left:188px;top:269px;font-size:11px;line-height:13px;color:#000;font-weight:normal;letter-spacing:-0.2px;">PS Lower Pipe</div>
<div style="left:136px;top:287px;width:9px;height:9px;border:1px solid #808080;box-sizing:border-box;background:#fff"></div>
<div style="left:138px;top:291px;width:5px;height:1px;background:#000"></div>
<div style="left:140px;top:289px;width:1px;height:5px;background:#000"></div>
<div style="left:145px;top:291px;width:9px;height:1px;background:repeating-linear-gradient(90deg,#808080 0 1px,transparent 1px 2px)"></div>
<div style="left:154px;top:286px;width:11px;height:11px;border:1px solid #8c8c8c;box-sizing:border-box;background:#fff"></div>
<svg style="left:167px;top:284px" width="16" height="16" viewBox="0 0 16 16"><path d="M0.5 1.5 h3 M2 0 v3" stroke="#ffff00" stroke-width="1.3"/>
<path d="M6.5 4 V7.5 M9.5 1 V7.5 M12.5 5 V7.5" stroke="#000" stroke-width="1.1"/>
<rect x="4" y="7" width="1" height="1" fill="#000"/>
<path d="M2 9 L5 7.5 H15 V9 Z" fill="#d8d8d8"/>
<path d="M5 9 h3 M9 9 h2 M12 9 h2" stroke="#000" stroke-width="1"/>
<path d="M0 9.5 H16 V13 H2 Z" fill="#000090"/>
<path d="M2 11 h1 M4 11 h1" stroke="#000" stroke-width="1"/></svg>
<div class="t" style="left:188px;top:285px;font-size:11px;line-height:13px;color:#000;font-weight:normal;letter-spacing:-0.2px;">SB Upper Pipe</div>
<div style="left:136px;top:303px;width:9px;height:9px;border:1px solid #808080;box-sizing:border-box;background:#fff"></div>
<div style="left:138px;top:307px;width:5px;height:1px;background:#000"></div>
<div style="left:140px;top:305px;width:1px;height:5px;background:#000"></div>
<div style="left:145px;top:307px;width:9px;height:1px;background:repeating-linear-gradient(90deg,#808080 0 1px,transparent 1px 2px)"></div>
<div style="left:154px;top:302px;width:11px;height:11px;border:1px solid #8c8c8c;box-sizing:border-box;background:#fff"></div>
<svg style="left:167px;top:300px" width="16" height="16" viewBox="0 0 16 16"><path d="M0.5 1.5 h3 M2 0 v3" stroke="#ffff00" stroke-width="1.3"/>
<path d="M6.5 4 V7.5 M9.5 1 V7.5 M12.5 5 V7.5" stroke="#000" stroke-width="1.1"/>
<rect x="4" y="7" width="1" height="1" fill="#000"/>
<path d="M2 9 L5 7.5 H15 V9 Z" fill="#d8d8d8"/>
<path d="M5 9 h3 M9 9 h2 M12 9 h2" stroke="#000" stroke-width="1"/>
<path d="M0 9.5 H16 V13 H2 Z" fill="#000090"/>
<path d="M2 11 h1 M4 11 h1" stroke="#000" stroke-width="1"/></svg>
<div class="t" style="left:188px;top:301px;font-size:11px;line-height:13px;color:#000;font-weight:normal;letter-spacing:-0.2px;">SB Lower Pipe</div>
<div style="left:311px;top:41px;width:442px;height:1px;background:#a0a0a0"></div>
<div style="left:311px;top:41px;width:1px;height:588px;background:#a0a0a0"></div>
<div style="left:312px;top:42px;width:440px;height:1px;background:#696969"></div>
<div style="left:312px;top:42px;width:1px;height:586px;background:#696969"></div>
<div style="left:311px;top:628px;width:442px;height:1px;background:#fff"></div>
<div style="left:752px;top:41px;width:1px;height:588px;background:#fff"></div>
<div style="left:312px;top:627px;width:440px;height:1px;background:#fff"></div>
<div style="left:751px;top:42px;width:1px;height:586px;background:#fff"></div>
<div style="left:313px;top:63px;width:438px;height:1px;background:#fff"></div>
<div style="left:313px;top:63px;width:1px;height:564px;background:#fff"></div>
<div style="left:313px;top:626px;width:438px;height:1px;background:#696969"></div>
<div style="left:750px;top:63px;width:1px;height:564px;background:#696969"></div>
<div style="left:314px;top:625px;width:436px;height:1px;background:#a0a0a0"></div>
<div style="left:749px;top:64px;width:1px;height:562px;background:#a0a0a0"></div>
<div style="left:316px;top:46px;width:73px;height:17px;background:#f0f0f0"></div>
<div style="left:317px;top:46px;width:70px;height:1px;background:#fff"></div>
<div style="left:316px;top:47px;width:1px;height:16px;background:#fff"></div>
<div style="left:387px;top:47px;width:1px;height:16px;background:#a0a0a0"></div>
<div style="left:388px;top:48px;width:1px;height:15px;background:#696969"></div>
<div class="t" style="left:321px;top:49px;font-size:11px;line-height:13px;color:#000;font-weight:normal;letter-spacing:-0.25px;">Position Filter</div>
<div style="left:389px;top:46px;width:87px;height:17px;background:#f0f0f0"></div>
<div style="left:390px;top:46px;width:84px;height:1px;background:#fff"></div>
<div style="left:389px;top:47px;width:1px;height:16px;background:#fff"></div>
<div style="left:474px;top:47px;width:1px;height:16px;background:#a0a0a0"></div>
<div style="left:475px;top:48px;width:1px;height:15px;background:#696969"></div>
<div class="t" style="left:395px;top:49px;font-size:11px;line-height:13px;color:#000;font-weight:normal;letter-spacing:-0.2px;">Position Results</div>
<div style="left:476px;top:46px;width:48px;height:17px;background:#f0f0f0"></div>
<div style="left:477px;top:46px;width:45px;height:1px;background:#fff"></div>
<div style="left:476px;top:47px;width:1px;height:16px;background:#fff"></div>
<div class="t" style="left:482px;top:49px;font-size:11px;line-height:13px;color:#000;font-weight:normal;letter-spacing:-0.2px;">Attitude</div>
<div style="left:524px;top:43px;width:46px;height:22px;background:#f0f0f0"></div>
<div style="left:525px;top:43px;width:45px;height:1px;background:#fff"></div>
<div style="left:524px;top:44px;width:1px;height:20px;background:#fff"></div>
<div class="t" style="left:530px;top:47px;font-size:11px;line-height:13px;color:#000;font-weight:normal;letter-spacing:-0.3px;">Height</div>
<div style="left:525px;top:42px;width:45px;height:22px;border:3px solid #e8413c;box-sizing:border-box"></div>
<div style="left:323px;top:78px;width:417px;height:1px;background:#a0a0a0"></div>
<div style="left:324px;top:79px;width:416px;height:1px;background:#fff"></div>
<div style="left:323px;top:78px;width:1px;height:198px;background:#a0a0a0"></div>
<div style="left:324px;top:79px;width:1px;height:197px;background:#fff"></div>
<div style="left:323px;top:275px;width:417px;height:1px;background:#a0a0a0"></div>
<div style="left:323px;top:276px;width:418px;height:1px;background:#fff"></div>
<div style="left:739px;top:78px;width:1px;height:198px;background:#a0a0a0"></div>
<div style="left:740px;top:78px;width:1px;height:199px;background:#fff"></div>
<div style="left:329px;top:72px;width:36px;height:10px;background:#f0f0f0"></div>
<div class="t" style="left:332px;top:73px;font-size:11px;line-height:13px;color:#000;font-weight:normal;letter-spacing:-0.25px;-webkit-text-stroke:0.15px currentColor;">Height</div>
<div style="left:330px;top:95px;width:324px;height:175px;background:#f0f0f0"></div>
<div style="left:330px;top:94px;width:324px;height:1px;background:#696969"></div>
<div style="left:330px;top:94px;width:1px;height:176px;background:#696969"></div>
<div style="left:330px;top:269px;width:324px;height:1px;background:#fff"></div>
<div style="left:653px;top:95px;width:1px;height:175px;background:#fff"></div>
<div style="left:332px;top:96px;width:319px;height:14px;background:#f2f2f2"></div>
<div style="left:332px;top:110px;width:319px;height:1px;background:#a0a0a0"></div>
<div style="left:390px;top:96px;width:1px;height:31px;background:#a0a0a0"></div>
<div style="left:391px;top:96px;width:1px;height:14px;background:#fff"></div>
<div style="left:473px;top:96px;width:1px;height:31px;background:#a0a0a0"></div>
<div style="left:474px;top:96px;width:1px;height:14px;background:#fff"></div>
<div style="left:559px;top:96px;width:1px;height:31px;background:#a0a0a0"></div>
<div style="left:560px;top:96px;width:1px;height:14px;background:#fff"></div>
<div style="left:332px;top:111px;width:58px;height:16px;background:#ffffe1"></div>
<div style="left:391px;top:111px;width:82px;height:16px;background:#ffffe1"></div>
<div style="left:474px;top:111px;width:85px;height:16px;background:#fff"></div>
<div style="left:560px;top:111px;width:90px;height:16px;background:#ffffe1"></div>
<div style="left:650px;top:96px;width:1px;height:31px;background:#a0a0a0"></div>
<div class="t s" style="left:260.0px;width:200px;text-align:center;top:95px;font-size:12px;line-height:14px;color:#000;font-weight:normal;letter-spacing:0px">Priority</div>
<div class="t s" style="left:395px;top:95px;font-size:12px;line-height:14px;color:#000;font-weight:normal;letter-spacing:0px;">Method</div>
<div class="t s" style="left:416.0px;width:200px;text-align:center;top:95px;font-size:12px;line-height:14px;color:#000;font-weight:normal;letter-spacing:0.2px">Max Age</div>
<div class="t s" style="left:504.5px;width:200px;text-align:center;top:95px;font-size:12px;line-height:14px;color:#000;font-weight:normal;letter-spacing:-0.2px">Skew</div>
<div class="t s" style="left:260.0px;width:200px;text-align:center;top:113px;font-size:12px;line-height:14px;color:#000;font-weight:normal;letter-spacing:0px">1</div>
<div class="t s" style="left:394px;top:113px;width:78px;overflow:hidden;font-size:12px;line-height:14px">Heave Pitch Roll</div>
<div class="t s" style="left:416.0px;width:200px;text-align:center;top:113px;font-size:12px;line-height:14px;color:#000;font-weight:normal;letter-spacing:0px">1.00 [s]</div>
<div style="left:561px;top:112px;width:15px;height:15px;background:#fff"></div>
<div style="left:561px;top:112px;width:15px;height:1px;background:#a0a0a0"></div>
<div style="left:561px;top:112px;width:1px;height:15px;background:#a0a0a0"></div>
<div style="left:562px;top:113px;width:13px;height:1px;background:#696969"></div>
<div style="left:562px;top:113px;width:1px;height:13px;background:#696969"></div>
<div style="left:561px;top:126px;width:15px;height:1px;background:#fff"></div>
<div style="left:575px;top:112px;width:1px;height:15px;background:#fff"></div>
<div style="left:562px;top:125px;width:13px;height:1px;background:#e3e3e3"></div>
<div style="left:574px;top:113px;width:1px;height:13px;background:#e3e3e3"></div>
<div class="t s" style="left:505.0px;width:200px;text-align:center;top:113px;font-size:12px;line-height:14px;color:#000;font-weight:normal;letter-spacing:0px">No</div>
<div style="left:329px;top:92px;width:326px;height:38px;border:3px solid #e8413c;box-sizing:border-box"></div>
<div style="left:660px;top:92px;width:75px;height:22px;background:#f0f0f0"></div>
<div style="left:660px;top:92px;width:75px;height:1px;background:#fff"></div>
<div style="left:660px;top:92px;width:1px;height:22px;background:#fff"></div>
<div style="left:660px;top:113px;width:75px;height:1px;background:#696969"></div>
<div style="left:734px;top:92px;width:1px;height:22px;background:#696969"></div>
<div style="left:661px;top:112px;width:73px;height:1px;background:#a0a0a0"></div>
<div style="left:733px;top:93px;width:1px;height:20px;background:#a0a0a0"></div>
<div class="t" style="left:597.5px;width:200px;text-align:center;top:96px;font-size:11px;line-height:13px;color:#a0a0a0;font-weight:normal;letter-spacing:0.15px">Move Up</div>
<div style="left:660px;top:128px;width:75px;height:22px;background:#f0f0f0"></div>
<div style="left:660px;top:128px;width:75px;height:1px;background:#fff"></div>
<div style="left:660px;top:128px;width:1px;height:22px;background:#fff"></div>
<div style="left:660px;top:149px;width:75px;height:1px;background:#696969"></div>
<div style="left:734px;top:128px;width:1px;height:22px;background:#696969"></div>
<div style="left:661px;top:148px;width:73px;height:1px;background:#a0a0a0"></div>
<div style="left:733px;top:129px;width:1px;height:20px;background:#a0a0a0"></div>
<div class="t" style="left:597.5px;width:200px;text-align:center;top:132px;font-size:11px;line-height:13px;color:#a0a0a0;font-weight:normal;letter-spacing:0.15px">Move Down</div>
<div style="left:323px;top:290px;width:417px;height:1px;background:#a0a0a0"></div>
<div style="left:324px;top:291px;width:416px;height:1px;background:#fff"></div>
<div style="left:323px;top:290px;width:1px;height:164px;background:#a0a0a0"></div>
<div style="left:324px;top:291px;width:1px;height:163px;background:#fff"></div>
<div style="left:323px;top:453px;width:417px;height:1px;background:#a0a0a0"></div>
<div style="left:323px;top:454px;width:418px;height:1px;background:#fff"></div>
<div style="left:739px;top:290px;width:1px;height:164px;background:#a0a0a0"></div>
<div style="left:740px;top:290px;width:1px;height:165px;background:#fff"></div>
<div style="left:330px;top:284px;width:82px;height:10px;background:#f0f0f0"></div>
<div class="t" style="left:333px;top:284px;font-size:11px;line-height:13px;color:#000;font-weight:normal;letter-spacing:-0.35px;-webkit-text-stroke:0.15px currentColor;">Tide Parameters</div>
<div style="left:330px;top:301px;width:404px;height:147px;background:#f0f0f0"></div>
<div style="left:330px;top:301px;width:404px;height:1px;background:#696969"></div>
<div style="left:330px;top:301px;width:1px;height:147px;background:#696969"></div>
<div style="left:330px;top:447px;width:404px;height:1px;background:#fff"></div>
<div style="left:733px;top:301px;width:1px;height:147px;background:#fff"></div>
<div style="left:332px;top:304px;width:173px;height:17px;background:#ffffe1"></div>
<div style="left:506px;top:304px;width:227px;height:17px;background:#fff"></div>
<div style="left:505px;top:304px;width:1px;height:18px;background:#a0a0a0"></div>
<div style="left:332px;top:321px;width:401px;height:1px;background:#a0a0a0"></div>
<div class="t s" style="left:335px;top:306px;font-size:12px;line-height:14px;color:#000;font-weight:normal;letter-spacing:0px;">Tide method</div>
<div class="t s" style="left:509.5px;width:200px;text-align:center;top:306px;font-size:12px;line-height:14px;color:#000;font-weight:normal;letter-spacing:0px">Tide gauge</div>
<div style="left:713px;top:304px;width:19px;height:17px;background:#f0f0f0"></div>
<div style="left:713px;top:304px;width:19px;height:1px;background:#fff"></div>
<div style="left:713px;top:304px;width:1px;height:17px;background:#fff"></div>
<div style="left:713px;top:320px;width:19px;height:1px;background:#696969"></div>
<div style="left:731px;top:304px;width:1px;height:17px;background:#696969"></div>
<div style="left:714px;top:319px;width:17px;height:1px;background:#a0a0a0"></div>
<div style="left:730px;top:305px;width:1px;height:15px;background:#a0a0a0"></div>
<svg style="left:719px;top:311px" width="7" height="4" viewBox="0 0 7 4"><path d="M0 0 H7 L3.5 4 Z" fill="#000"/></svg>
<div style="left:332px;top:322px;width:173px;height:17px;background:#ffffe1"></div>
<div style="left:506px;top:322px;width:227px;height:17px;background:#fff"></div>
<div style="left:505px;top:322px;width:1px;height:18px;background:#a0a0a0"></div>
<div style="left:332px;top:339px;width:401px;height:1px;background:#a0a0a0"></div>
<div class="t s" style="left:335px;top:324px;font-size:12px;line-height:14px;color:#000;font-weight:normal;letter-spacing:0px;">Number of tide gauges</div>
<div class="t s" style="left:509.5px;width:200px;text-align:center;top:324px;font-size:12px;line-height:14px;color:#000;font-weight:normal;letter-spacing:0px">1</div>
<div style="left:714px;top:322px;width:17px;height:8px;background:#f0f0f0"></div>
<div style="left:714px;top:322px;width:17px;height:1px;background:#fff"></div>
<div style="left:714px;top:322px;width:1px;height:8px;background:#fff"></div>
<div style="left:714px;top:329px;width:17px;height:1px;background:#696969"></div>
<div style="left:730px;top:322px;width:1px;height:8px;background:#696969"></div>
<div style="left:715px;top:328px;width:15px;height:1px;background:#a0a0a0"></div>
<div style="left:729px;top:323px;width:1px;height:6px;background:#a0a0a0"></div>
<div style="left:714px;top:330px;width:17px;height:9px;background:#f0f0f0"></div>
<div style="left:714px;top:330px;width:17px;height:1px;background:#fff"></div>
<div style="left:714px;top:330px;width:1px;height:9px;background:#fff"></div>
<div style="left:714px;top:338px;width:17px;height:1px;background:#696969"></div>
<div style="left:730px;top:330px;width:1px;height:9px;background:#696969"></div>
<div style="left:715px;top:337px;width:15px;height:1px;background:#a0a0a0"></div>
<div style="left:729px;top:331px;width:1px;height:7px;background:#a0a0a0"></div>
<svg style="left:720px;top:325px" width="5" height="3" viewBox="0 0 5 3"><path d="M0 3 H5 L2.5 0 Z" fill="#000"/></svg>
<svg style="left:720px;top:333px" width="5" height="3" viewBox="0 0 5 3"><path d="M0 0 H5 L2.5 3 Z" fill="#000"/></svg>
<div style="left:332px;top:340px;width:173px;height:17px;background:#ffffe1"></div>
<div style="left:506px;top:340px;width:227px;height:17px;background:#fff"></div>
<div style="left:505px;top:340px;width:1px;height:18px;background:#a0a0a0"></div>
<div style="left:332px;top:357px;width:401px;height:1px;background:#a0a0a0"></div>
<div class="t s" style="left:335px;top:342px;font-size:12px;line-height:14px;color:#000;font-weight:normal;letter-spacing:0px;">Maximum age tide values</div>
<div class="t s" style="left:518.5px;width:200px;text-align:center;top:342px;font-size:12px;line-height:14px;color:#000;font-weight:normal;letter-spacing:0px">60.00 [s]</div>
<div style="left:332px;top:304px;width:174px;height:1px;background:#000"></div>
<div style="left:332px;top:380px;width:401px;height:1px;background:#fff"></div>
<div style="left:332px;top:388px;width:401px;height:2px;background:#000"></div>
<div style="left:332px;top:390px;width:401px;height:16px;background:#f0f0f0"></div>
<div style="left:505px;top:390px;width:1px;height:34px;background:#a0a0a0"></div>
<div style="left:332px;top:406px;width:401px;height:1px;background:#a0a0a0"></div>
<div class="t s" style="left:335px;top:391px;font-size:12px;line-height:14px;color:#000;font-weight:normal;letter-spacing:0px;">Tide system</div>
<div class="t s" style="left:518.5px;width:200px;text-align:center;top:391px;font-size:12px;line-height:14px;color:#000;font-weight:normal;letter-spacing:0px">Tide gauge</div>
<div style="left:332px;top:407px;width:173px;height:16px;background:#ffffe1"></div>
<div style="left:506px;top:407px;width:227px;height:16px;background:#fff"></div>
<div class="t s" style="left:335px;top:409px;font-size:12px;line-height:14px;color:#000;font-weight:normal;letter-spacing:-0.25px;">Tide Gauge 01 - Saadiyat</div>
<div class="t s" style="left:509.5px;width:200px;text-align:center;top:409px;font-size:12px;line-height:14px;color:#000;font-weight:normal;letter-spacing:0px">Tide 01</div>
<div style="left:713px;top:407px;width:19px;height:17px;background:#f0f0f0"></div>
<div style="left:713px;top:407px;width:19px;height:1px;background:#fff"></div>
<div style="left:713px;top:407px;width:1px;height:17px;background:#fff"></div>
<div style="left:713px;top:423px;width:19px;height:1px;background:#696969"></div>
<div style="left:731px;top:407px;width:1px;height:17px;background:#696969"></div>
<div style="left:714px;top:422px;width:17px;height:1px;background:#a0a0a0"></div>
<div style="left:730px;top:408px;width:1px;height:15px;background:#a0a0a0"></div>
<svg style="left:719px;top:414px" width="7" height="4" viewBox="0 0 7 4"><path d="M0 0 H7 L3.5 4 Z" fill="#000"/></svg>
<div style="left:329px;top:301px;width:407px;height:126px;border:3px solid #e8413c;box-sizing:border-box"></div>
<div style="left:323px;top:468px;width:417px;height:1px;background:#a0a0a0"></div>
<div style="left:324px;top:469px;width:416px;height:1px;background:#fff"></div>
<div style="left:323px;top:468px;width:1px;height:148px;background:#a0a0a0"></div>
<div style="left:324px;top:469px;width:1px;height:147px;background:#fff"></div>
<div style="left:323px;top:615px;width:417px;height:1px;background:#a0a0a0"></div>
<div style="left:323px;top:616px;width:418px;height:1px;background:#fff"></div>
<div style="left:739px;top:468px;width:1px;height:148px;background:#a0a0a0"></div>
<div style="left:740px;top:468px;width:1px;height:149px;background:#fff"></div>
<div style="left:330px;top:462px;width:135px;height:10px;background:#f0f0f0"></div>
<div class="t" style="left:333px;top:463px;font-size:11px;line-height:13px;color:#000;font-weight:normal;letter-spacing:-0.25px;-webkit-text-stroke:0.15px currentColor;">Draft and Squat Parameters</div>
<div style="left:330px;top:481px;width:404px;height:128px;background:#f0f0f0"></div>
<div style="left:330px;top:481px;width:404px;height:1px;background:#696969"></div>
<div style="left:330px;top:481px;width:1px;height:128px;background:#696969"></div>
<div style="left:330px;top:608px;width:404px;height:1px;background:#fff"></div>
<div style="left:733px;top:481px;width:1px;height:128px;background:#fff"></div>
<div style="left:332px;top:483px;width:173px;height:17px;background:#ffffe1"></div>
<div style="left:506px;top:483px;width:227px;height:17px;background:#fff"></div>
<div style="left:505px;top:483px;width:1px;height:18px;background:#a0a0a0"></div>
<div style="left:332px;top:500px;width:401px;height:1px;background:#a0a0a0"></div>
<div class="t s" style="left:335px;top:485px;font-size:12px;line-height:14px;color:#000;font-weight:normal;letter-spacing:0px;">Draft method</div>
<div class="t s" style="left:509.5px;width:200px;text-align:center;top:485px;font-size:12px;line-height:14px;color:#000;font-weight:normal;letter-spacing:0px">Enabled</div>
<div style="left:713px;top:483px;width:19px;height:17px;background:#f0f0f0"></div>
<div style="left:713px;top:483px;width:19px;height:1px;background:#fff"></div>
<div style="left:713px;top:483px;width:1px;height:17px;background:#fff"></div>
<div style="left:713px;top:499px;width:19px;height:1px;background:#696969"></div>
<div style="left:731px;top:483px;width:1px;height:17px;background:#696969"></div>
<div style="left:714px;top:498px;width:17px;height:1px;background:#a0a0a0"></div>
<div style="left:730px;top:484px;width:1px;height:15px;background:#a0a0a0"></div>
<svg style="left:719px;top:490px" width="7" height="4" viewBox="0 0 7 4"><path d="M0 0 H7 L3.5 4 Z" fill="#000"/></svg>
<div style="left:332px;top:501px;width:173px;height:17px;background:#ffffe1"></div>
<div style="left:506px;top:501px;width:227px;height:17px;background:#fff"></div>
<div style="left:505px;top:501px;width:1px;height:18px;background:#a0a0a0"></div>
<div style="left:332px;top:518px;width:401px;height:1px;background:#a0a0a0"></div>
<div class="t s" style="left:335px;top:503px;font-size:12px;line-height:14px;color:#000;font-weight:normal;letter-spacing:0px;">Draft sensor - Draft Aft</div>
<div class="t s" style="left:509.5px;width:200px;text-align:center;top:503px;font-size:12px;line-height:14px;color:#000;font-weight:normal;letter-spacing:0px">Enabled</div>
<div style="left:713px;top:501px;width:19px;height:17px;background:#f0f0f0"></div>
<div style="left:713px;top:501px;width:19px;height:1px;background:#fff"></div>
<div style="left:713px;top:501px;width:1px;height:17px;background:#fff"></div>
<div style="left:713px;top:517px;width:19px;height:1px;background:#696969"></div>
<div style="left:731px;top:501px;width:1px;height:17px;background:#696969"></div>
<div style="left:714px;top:516px;width:17px;height:1px;background:#a0a0a0"></div>
<div style="left:730px;top:502px;width:1px;height:15px;background:#a0a0a0"></div>
<svg style="left:719px;top:508px" width="7" height="4" viewBox="0 0 7 4"><path d="M0 0 H7 L3.5 4 Z" fill="#000"/></svg>
<div style="left:332px;top:519px;width:173px;height:17px;background:#ffffe1"></div>
<div style="left:506px;top:519px;width:227px;height:17px;background:#fff"></div>
<div style="left:505px;top:519px;width:1px;height:18px;background:#a0a0a0"></div>
<div style="left:332px;top:536px;width:401px;height:1px;background:#a0a0a0"></div>
<div class="t s" style="left:335px;top:521px;font-size:12px;line-height:14px;color:#000;font-weight:normal;letter-spacing:0px;">Draft sensor - Draft Fore</div>
<div class="t s" style="left:509.5px;width:200px;text-align:center;top:521px;font-size:12px;line-height:14px;color:#000;font-weight:normal;letter-spacing:0px">Enabled</div>
<div style="left:713px;top:519px;width:19px;height:17px;background:#f0f0f0"></div>
<div style="left:713px;top:519px;width:19px;height:1px;background:#fff"></div>
<div style="left:713px;top:519px;width:1px;height:17px;background:#fff"></div>
<div style="left:713px;top:535px;width:19px;height:1px;background:#696969"></div>
<div style="left:731px;top:519px;width:1px;height:17px;background:#696969"></div>
<div style="left:714px;top:534px;width:17px;height:1px;background:#a0a0a0"></div>
<div style="left:730px;top:520px;width:1px;height:15px;background:#a0a0a0"></div>
<svg style="left:719px;top:526px" width="7" height="4" viewBox="0 0 7 4"><path d="M0 0 H7 L3.5 4 Z" fill="#000"/></svg>
<div style="left:332px;top:537px;width:173px;height:17px;background:#ffffe1"></div>
<div style="left:506px;top:537px;width:227px;height:17px;background:#fff"></div>
<div style="left:505px;top:537px;width:1px;height:18px;background:#a0a0a0"></div>
<div style="left:332px;top:554px;width:401px;height:1px;background:#a0a0a0"></div>
<div class="t s" style="left:335px;top:539px;font-size:12px;line-height:14px;color:#000;font-weight:normal;letter-spacing:0px;">Filter length</div>
<div class="t s" style="left:518.5px;width:200px;text-align:center;top:539px;font-size:12px;line-height:14px;color:#000;font-weight:normal;letter-spacing:0px">1 [s]</div>
<div style="left:332px;top:555px;width:173px;height:17px;background:#ffffe1"></div>
<div style="left:506px;top:555px;width:227px;height:17px;background:#fff"></div>
<div style="left:505px;top:555px;width:1px;height:18px;background:#a0a0a0"></div>
<div style="left:332px;top:572px;width:401px;height:1px;background:#a0a0a0"></div>
<div class="t s" style="left:335px;top:557px;font-size:12px;line-height:14px;color:#000;font-weight:normal;letter-spacing:0px;">Manual draft</div>
<div class="t s" style="left:518.5px;width:200px;text-align:center;top:557px;font-size:12px;line-height:14px;color:#000;font-weight:normal;letter-spacing:0px">Not Used</div>
<div style="left:332px;top:573px;width:173px;height:17px;background:#ffffe1"></div>
<div style="left:506px;top:573px;width:227px;height:17px;background:#fff"></div>
<div style="left:505px;top:573px;width:1px;height:18px;background:#a0a0a0"></div>
<div style="left:332px;top:590px;width:401px;height:1px;background:#a0a0a0"></div>
<div class="t s" style="left:335px;top:575px;font-size:12px;line-height:14px;color:#000;font-weight:normal;letter-spacing:0px;">Squat method</div>
<div class="t s" style="left:509.5px;width:200px;text-align:center;top:575px;font-size:12px;line-height:14px;color:#000;font-weight:normal;letter-spacing:0px">Disabled</div>
<div style="left:713px;top:573px;width:19px;height:17px;background:#f0f0f0"></div>
<div style="left:713px;top:573px;width:19px;height:1px;background:#fff"></div>
<div style="left:713px;top:573px;width:1px;height:17px;background:#fff"></div>
<div style="left:713px;top:589px;width:19px;height:1px;background:#696969"></div>
<div style="left:731px;top:573px;width:1px;height:17px;background:#696969"></div>
<div style="left:714px;top:588px;width:17px;height:1px;background:#a0a0a0"></div>
<div style="left:730px;top:574px;width:1px;height:15px;background:#a0a0a0"></div>
<svg style="left:719px;top:580px" width="7" height="4" viewBox="0 0 7 4"><path d="M0 0 H7 L3.5 4 Z" fill="#000"/></svg>
<div style="left:332px;top:484px;width:174px;height:1px;background:#000"></div>
<div style="left:329px;top:481px;width:407px;height:112px;border:3px solid #e8413c;box-sizing:border-box"></div>
<div style="left:115px;top:640px;width:76px;height:23px;background:#f0f0f0"></div>
<div style="left:115px;top:640px;width:76px;height:1px;background:#fff"></div>
<div style="left:115px;top:640px;width:1px;height:23px;background:#fff"></div>
<div style="left:115px;top:662px;width:76px;height:1px;background:#696969"></div>
<div style="left:190px;top:640px;width:1px;height:23px;background:#696969"></div>
<div style="left:116px;top:661px;width:74px;height:1px;background:#a0a0a0"></div>
<div style="left:189px;top:641px;width:1px;height:21px;background:#a0a0a0"></div>
<div class="t" style="left:52.5px;width:200px;text-align:center;top:645px;font-size:11px;line-height:13px;color:#000;font-weight:normal;letter-spacing:0px">OK</div>
<div style="left:196px;top:640px;width:76px;height:23px;background:#f0f0f0"></div>
<div style="left:196px;top:640px;width:76px;height:1px;background:#fff"></div>
<div style="left:196px;top:640px;width:1px;height:23px;background:#fff"></div>
<div style="left:196px;top:662px;width:76px;height:1px;background:#696969"></div>
<div style="left:271px;top:640px;width:1px;height:23px;background:#696969"></div>
<div style="left:197px;top:661px;width:74px;height:1px;background:#a0a0a0"></div>
<div style="left:270px;top:641px;width:1px;height:21px;background:#a0a0a0"></div>
<div class="t" style="left:133.5px;width:200px;text-align:center;top:645px;font-size:11px;line-height:13px;color:#a0a0a0;font-weight:normal;letter-spacing:0px">Apply</div>
<div style="left:277px;top:640px;width:76px;height:23px;background:#f0f0f0"></div>
<div style="left:277px;top:640px;width:76px;height:1px;background:#fff"></div>
<div style="left:277px;top:640px;width:1px;height:23px;background:#fff"></div>
<div style="left:277px;top:662px;width:76px;height:1px;background:#696969"></div>
<div style="left:352px;top:640px;width:1px;height:23px;background:#696969"></div>
<div style="left:278px;top:661px;width:74px;height:1px;background:#a0a0a0"></div>
<div style="left:351px;top:641px;width:1px;height:21px;background:#a0a0a0"></div>
<div class="t" style="left:214.5px;width:200px;text-align:center;top:645px;font-size:11px;line-height:13px;color:#000;font-weight:normal;letter-spacing:0px">Cancel</div>
<svg style="left:740px;top:655px" width="13" height="14" viewBox="0 0 13 14"><path d="M12.5 3 L2 13.5 M12.5 7 L6 13.5" stroke="#fff" stroke-width="1.2"/><path d="M13 4 L3.5 13.5 M13 8 L7.5 13.5 M13 12 L11.5 13.5" stroke="#8a8a8a" stroke-width="1.5"/></svg>
</body></html>
